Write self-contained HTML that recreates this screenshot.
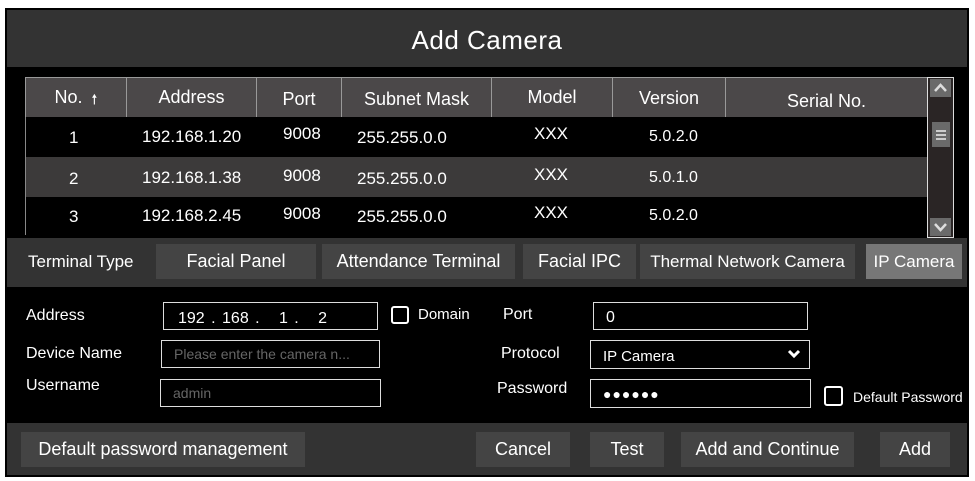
<!DOCTYPE html>
<html><head><style>
*{margin:0;padding:0;box-sizing:border-box}
body{width:975px;height:481px;background:#fff;position:relative;overflow:hidden;font-family:"Liberation Sans",sans-serif;color:#fff}
.a{position:absolute}
.c{display:flex;align-items:center;justify-content:center}
.h{font-size:18px;background:#4b4849;top:77px;height:40px;border-right:1px solid #999;border-top:1px solid #999}
.t{font-size:17px}
.btn{background:#444;font-size:18px;position:absolute;display:flex;align-items:center;justify-content:center}
.lbl{position:absolute;font-size:16px}
.in{position:absolute;border:1px solid #ddd;background:#000;font-size:15px;padding-left:12px;display:flex;align-items:center}
.cb{position:absolute;width:18px;height:18px;border:2px solid #fff;border-radius:3px}
.ln{position:absolute;left:4px;width:10px;height:2px;background:#ccc}
</style></head><body>
<div class="a" style="left:5px;top:8px;width:964px;height:469px;background:#000"></div>
<div class="a c" style="left:7px;top:10px;width:960px;height:57px;background:#333;font-size:26px;letter-spacing:.5px;padding-top:4px">Add Camera</div>
<div class="a" style="left:25px;top:117px;width:902px;height:40px;background:#000"></div>
<div class="a" style="left:25px;top:157px;width:902px;height:40px;background:#3c3a3a"></div>
<div class="a" style="left:25px;top:197px;width:902px;height:38px;background:#000"></div>
<div class="a c h" style="left:25px;width:102px;border-left:1px solid #999">No.&nbsp;<span style="font-size:14px;margin-top:6px">&nbsp;🠕</span></div>
<div class="a c h" style="left:127px;width:130px">Address</div>
<div class="a c h" style="left:257px;width:85px;padding-top:4px">Port</div>
<div class="a c h" style="left:342px;width:150px;padding-top:4px">Subnet Mask</div>
<div class="a c h" style="left:492px;width:121px">Model</div>
<div class="a c h" style="left:613px;width:113px;padding-top:2px">Version</div>
<div class="a c h" style="left:726px;width:201px;padding-top:8px;border-right:none">Serial No.</div>
<div class="a" style="left:25px;top:117px;width:1px;height:118px;background:#888"></div>
<div class="a t" style="left:69px;top:128px">1</div><div class="a t" style="left:69px;top:169px">2</div><div class="a t" style="left:69px;top:207px">3</div>
<div class="a t" style="left:142px;top:127px">192.168.1.20</div><div class="a t" style="left:142px;top:168px">192.168.1.38</div><div class="a t" style="left:142px;top:206px">192.168.2.45</div>
<div class="a t" style="left:283px;top:124px">9008</div><div class="a t" style="left:283px;top:166px">9008</div><div class="a t" style="left:283px;top:204px">9008</div>
<div class="a t" style="left:357px;top:128px">255.255.0.0</div><div class="a t" style="left:357px;top:169px">255.255.0.0</div><div class="a t" style="left:357px;top:207px">255.255.0.0</div>
<div class="a t" style="left:534px;top:124px">XXX</div><div class="a t" style="left:534px;top:165px">XXX</div><div class="a t" style="left:534px;top:203px">XXX</div>
<div class="a t" style="left:649px;top:128px;font-size:16px">5.0.2.0</div><div class="a t" style="left:649px;top:169px;font-size:16px">5.0.1.0</div><div class="a t" style="left:649px;top:207px;font-size:16px">5.0.2.0</div>
<div class="a" style="left:927px;top:77px;width:27px;height:161px;border:1px solid #ddd;background:#2a2525"></div>
<div class="a" style="left:930px;top:79px;width:21px;height:18px;background:#6a6a6a"><svg width="21" height="18"><path d="M5 12 L10.5 6 L16 12" stroke="#ddd" stroke-width="2.5" fill="none"/></svg></div>
<div class="a" style="left:932px;top:122px;width:18px;height:25px;background:#6a6a6a"><div class="ln" style="top:8px"></div><div class="ln" style="top:12px"></div><div class="ln" style="top:16px"></div></div>
<div class="a" style="left:930px;top:218px;width:21px;height:18px;background:#6a6a6a"><svg width="21" height="18"><path d="M5 6 L10.5 12 L16 6" stroke="#ddd" stroke-width="2.5" fill="none"/></svg></div>
<div class="a" style="left:7px;top:238px;width:960px;height:49px;background:#333"></div>
<div class="lbl" style="left:28px;top:252px;font-size:17px">Terminal Type</div>
<div class="btn" style="left:156px;top:244px;width:160px;height:35px">Facial Panel</div>
<div class="btn" style="left:322px;top:244px;width:193px;height:35px">Attendance Terminal</div>
<div class="btn" style="left:523px;top:244px;width:113px;height:35px">Facial IPC</div>
<div class="btn" style="left:640px;top:244px;width:215px;height:35px;font-size:17px">Thermal Network Camera</div>
<div class="btn" style="left:866px;top:244px;width:96px;height:35px;background:#777;font-size:17px">IP Camera</div>
<div class="lbl" style="left:26px;top:307px">Address</div>
<div class="in" style="left:163px;top:302px;width:215px;height:28px;padding-left:14px;font-size:16px;padding-top:6px;word-spacing:2px">192&nbsp;.&nbsp;168&nbsp;.&nbsp;&nbsp;&nbsp;1&nbsp;.&nbsp;&nbsp;&nbsp;2</div>
<div class="cb" style="left:391px;top:306px"></div>
<div class="lbl" style="left:418px;top:306px;font-size:15px">Domain</div>
<div class="lbl" style="left:503px;top:306px">Port</div>
<div class="in" style="left:593px;top:302px;width:215px;height:28px;font-size:16px;padding-top:4px">0</div>
<div class="lbl" style="left:26px;top:345px">Device Name</div>
<div class="in" style="left:161px;top:340px;width:219px;height:28px;color:#666;font-size:14px">Please enter the camera n...</div>
<div class="lbl" style="left:501px;top:345px">Protocol</div>
<div class="in" style="left:590px;top:340px;width:220px;height:29px;font-size:15px;padding-top:4px">IP Camera<svg style="position:absolute;right:8px;top:8px" width="14" height="10"><path d="M2 2 L7 7 L12 2" stroke="#fff" stroke-width="3" fill="none"/></svg></div>
<div class="lbl" style="left:26px;top:377px">Username</div>
<div class="in" style="left:160px;top:379px;width:221px;height:28px;color:#666;font-size:14px">admin</div>
<div class="lbl" style="left:497px;top:380px">Password</div>
<div class="in" style="left:590px;top:379px;width:221px;height:29px;font-size:14px;letter-spacing:1px">●●●●●●</div>
<div class="cb" style="left:824px;top:386px;width:19px;height:20px"></div>
<div class="lbl" style="left:853px;top:389px;font-size:14px">Default Password</div>
<div class="a" style="left:7px;top:423px;width:960px;height:52px;background:#333"></div>
<div class="btn" style="left:21px;top:432px;width:284px;height:35px">Default password management</div>
<div class="btn" style="left:476px;top:432px;width:94px;height:35px">Cancel</div>
<div class="btn" style="left:590px;top:432px;width:74px;height:35px">Test</div>
<div class="btn" style="left:681px;top:432px;width:173px;height:35px">Add and Continue</div>
<div class="btn" style="left:880px;top:432px;width:70px;height:35px">Add</div>
</body></html>
